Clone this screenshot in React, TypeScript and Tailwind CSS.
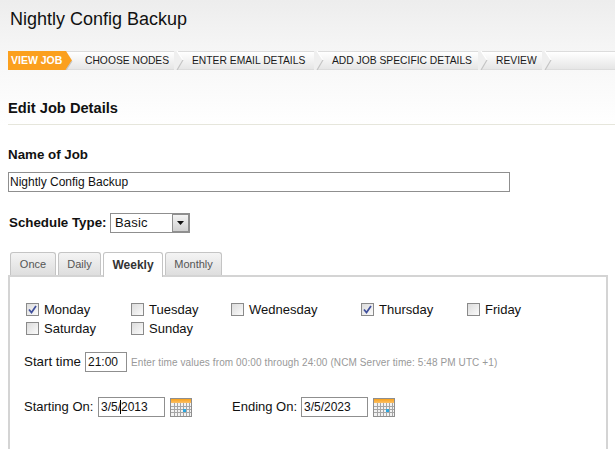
const Chevron = () => (
  <svg width="12" height="19" viewBox="0 0 12 19" className="absolute right-[-9px] -top-px z-10">
    <path d="M0 0 H3 L9 9 L3 19 H0 Z" fill="#efefef" />
    <path d="M3 0 L9 9" stroke="#ffffff" strokeWidth="1.2" fill="none" />
    <path d="M9 9 L3 19" stroke="#c4c4c4" strokeWidth="1.2" fill="none" />
  </svg>
);

const steps = [
  { label: "CHOOSE NODES", width: "w-[107px]" },
  { label: "ENTER EMAIL DETAILS", width: "w-[140px]" },
  { label: "ADD JOB SPECIFIC DETAILS", width: "w-[164px]" },
  { label: "REVIEW", width: "w-[64px]" },
];

const Check = ({ label, checked }: { label: string; checked?: boolean }) => (
  <label className="flex items-center gap-[5px] h-[19px] text-[13px] text-[#111]">
    <span className="w-[13px] h-[13px] border border-[#8a8a8a] bg-gradient-to-br from-[#dcdcdc] to-[#fbfbfb] flex items-center justify-center">
      {checked && (
        <svg width="9" height="9" viewBox="0 0 9 9">
          <path d="M1 4.5 L3.5 7.5 L8 1" stroke="#3f4f9c" strokeWidth="1.7" fill="none" />
        </svg>
      )}
    </span>
    {label}
  </label>
);

const Calendar = () => (
  <svg width="22" height="19" viewBox="0 0 22 19" className="shrink-0 block">
    <defs>
      <linearGradient id="calTop" x1="0" y1="0" x2="0" y2="1">
        <stop offset="0" stopColor="#f9a11b" />
        <stop offset="1" stopColor="#fbbf66" />
      </linearGradient>
    </defs>
    <rect x="0" y="0" width="22" height="19" fill="#8e8e8e" />
    <rect x="1" y="1" width="20" height="4" fill="url(#calTop)" />
    <rect x="1" y="5" width="20" height="13" fill="#f2f2f2" />
    {[4, 7, 10, 13, 16, 19].map((x) => (
      <rect key={x} x={x} y="5" width="1" height="13" fill="#a5a5a5" />
    ))}
    {[8, 11, 14].map((y) => (
      <rect key={y} x="1" y={y} width="20" height="1" fill="#a5a5a5" />
    ))}
    <rect x="13" y="11" width="3" height="3" fill="#2aa7e0" />
  </svg>
);

const Tab = ({ label, active, className }: { label: string; active?: boolean; className: string }) => (
  <div
    className={`flex items-center justify-center border border-b-0 border-[#c4c4c4] rounded-t-[3px] ${className} ${
      active
        ? "h-[25px] -mb-[2px] bg-white font-bold text-[#333] text-[12px]"
        : "h-[23px] bg-gradient-to-b from-[#f4f4f4] to-[#dedede] text-[#555] text-[11px]"
    }`}
  >
    {label}
  </div>
);

export default function App() {
  return (
    <div className="w-[615px] h-[449px] overflow-hidden bg-gradient-to-b from-[#ededed] via-[#f5f5f5] via-[45px] to-white to-[125px] font-['Liberation_Sans',Arial,sans-serif] text-[#111]">
      <div className="h-[51px] pl-[10px] pt-[8px] text-[18px] leading-[22px] text-[#111]">Nightly Config Backup</div>

      <div className="ml-[8px] h-[19px] flex bg-gradient-to-b from-white to-[#e6e6e6] border-y border-[#dcdcdc] text-[10.3px] text-[#1a1a1a] whitespace-nowrap">
        <div className="relative w-[62px] h-[17px] shrink-0 z-20">
          <div className="absolute left-0 -top-px w-[64px] h-[19px] bg-[#fba01e] text-white text-[10.5px] font-bold pl-[3px] leading-[19px] [clip-path:polygon(0_0,58px_0,64px_50%,58px_100%,0_100%)]">
            VIEW JOB
          </div>
          <svg width="8" height="10" viewBox="0 0 8 10" className="absolute left-[57px] top-[8px]">
            <path d="M7 1 L1 10" stroke="#c4c4c4" strokeWidth="1.2" fill="none" />
          </svg>
        </div>
        {steps.map((s) => (
          <div key={s.label} className={`relative h-[17px] leading-[17px] pl-[15px] shrink-0 ${s.width}`}>
            {s.label}
            <Chevron />
          </div>
        ))}
      </div>

      <div className="ml-[8px] mt-[30px] h-[25px] border-b border-[#e6e6dc] text-[14.67px] font-bold leading-[17px] text-[#111]">
        Edit Job Details
      </div>

      <div className="ml-[8px] mt-[23px] text-[13.33px] font-bold leading-[14px]">Name of Job</div>
      <input
        readOnly
        value="Nightly Config Backup"
        className="block ml-[8px] mt-[10px] w-[502px] h-[20px] border border-[#8f8f8f] bg-white px-[1px] text-[12px] text-[#111] outline-none"
      />

      <div className="ml-[9px] mt-[20px] h-[21px] flex items-center">
        <span className="text-[13.33px] font-bold w-[101px]">Schedule Type:</span>
        <div className="relative w-[80px] h-[20px] border border-[#8f8f8f] bg-white text-[13px] pl-[4px] leading-[18px] tracking-[0.2px]">
          Basic
          <div className="absolute right-0 top-0 w-[17px] h-[18px] border border-[#8f8f8f] bg-gradient-to-b from-[#f4f4f4] to-[#d0d0d0] flex items-center justify-center">
            <svg width="7" height="4" viewBox="0 0 7 4">
              <path d="M0 0 H7 L3.5 4 Z" fill="#111" />
            </svg>
          </div>
        </div>
      </div>

      <div className="ml-[10px] mt-[19px] flex items-end gap-[2px] h-[23px]">
        <Tab label="Once" className="w-[46px]" />
        <Tab label="Daily" className="w-[43px]" />
        <Tab label="Weekly" active className="w-[60px] relative z-10" />
        <Tab label="Monthly" className="w-[57px]" />
      </div>

      <div className="ml-[8px] w-[600px] h-[180px] border-t-2 border-x-2 border-[#d4d4d4] pt-[23px] pl-[16px]">
        <div className="grid grid-cols-[105px_100px_130px_106px_60px]">
          <Check label="Monday" checked />
          <Check label="Tuesday" />
          <Check label="Wednesday" />
          <Check label="Thursday" checked />
          <Check label="Friday" />
          <Check label="Saturday" />
          <Check label="Sunday" />
        </div>

        <div className="mt-[14px] flex items-center h-[20px] -ml-[2px]">
          <span className="text-[13.33px] w-[61px]">Start time</span>
          <input
            readOnly
            value="21:00"
            className="w-[42px] h-[20px] border border-[#8f8f8f] bg-white px-[2px] text-[12px] text-[#111] outline-none"
          />
          <span className="ml-[4px] text-[10px] tracking-[0.1px] text-[#999] whitespace-nowrap">
            Enter time values from 00:00 through 24:00 (NCM Server time: 5:48 PM UTC +1)
          </span>
        </div>

        <div className="mt-[25px] flex items-center h-[20px] -ml-[2px]">
          <span className="text-[13px] w-[74px] whitespace-nowrap">Starting On:</span>
          <div className="relative">
            <input
              readOnly
              value="3/5/2013"
              className="block w-[67px] h-[20px] border border-[#8f8f8f] bg-white px-[2px] text-[12px] text-[#111] outline-none"
            />
            <span className="absolute left-[22px] top-[3px] w-px h-[14px] bg-black" />
          </div>
          <span className="ml-[5px]"><Calendar /></span>
          <span className="ml-[40px] text-[13px] w-[69px] whitespace-nowrap">Ending On:</span>
          <input
            readOnly
            value="3/5/2023"
            className="w-[67px] h-[20px] border border-[#8f8f8f] bg-white px-[2px] text-[12px] text-[#111] outline-none"
          />
          <span className="ml-[5px]"><Calendar /></span>
        </div>
      </div>
    </div>
  );
}
